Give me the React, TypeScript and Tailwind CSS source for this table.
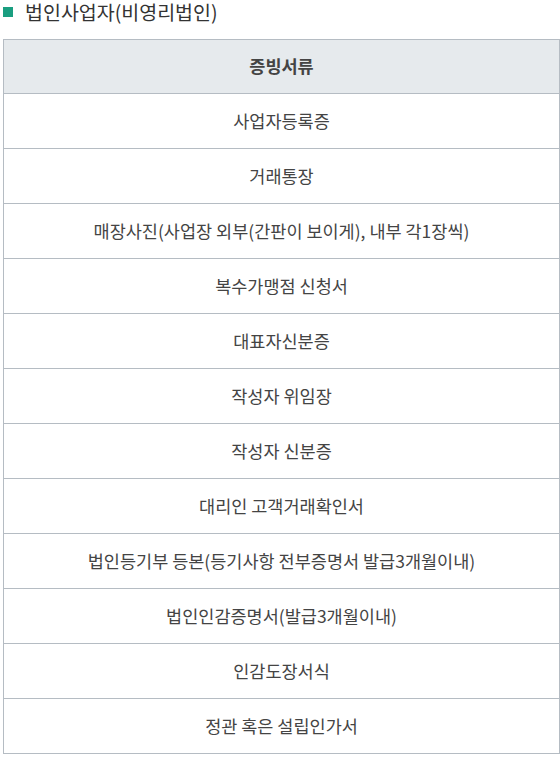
import React from 'react';

const docs: string[] = [
    '사업자등록증',
    '거래통장',
    '매장사진(사업장 외부(간판이 보이게), 내부 각1장씩)',
    '복수가맹점 신청서',
    '대표자신분증',
    '작성자 위임장',
    '작성자 신분증',
    '대리인 고객거래확인서',
    '법인등기부 등본(등기사항 전부증명서 발급3개월이내)',
    '법인인감증명서(발급3개월이내)',
    '인감도장서식',
    '정관 혹은 설립인가서',
];

const App: React.FC = () => {
    return (
        <div
            className="w-[560px] bg-white text-[#444]"
            style={{ fontFamily: '"Noto Sans CJK KR", "Noto Sans", sans-serif' }}
        >
            <h3 className="flex items-center h-[24px] text-[19.5px] text-[#333] leading-[24px]">
                <span className="ml-[3px] w-[10px] h-[10px] bg-[#1a9e80] mr-[12px]"></span>
                <span>법인사업자(비영리법인)</span>
            </h3>
            <div className="mt-[15px] ml-[3px] border border-[#b5bcc3]">
                <div className="h-[54px] flex items-center justify-center bg-[#e6eaed] text-[17.5px] font-bold text-[#444] border-b border-[#b5bcc3]">
                    증빙서류
                </div>
                {docs.map((d, i) => (
                    <div
                        key={i}
                        className={
                            'h-[54px] flex items-center justify-center text-[17.5px] ' +
                            (i < docs.length - 1 ? 'border-b border-[#b5bcc3] h-[55px]' : '')
                        }
                    >
                        {d}
                    </div>
                ))}
            </div>
        </div>
    );
};

export default App;
